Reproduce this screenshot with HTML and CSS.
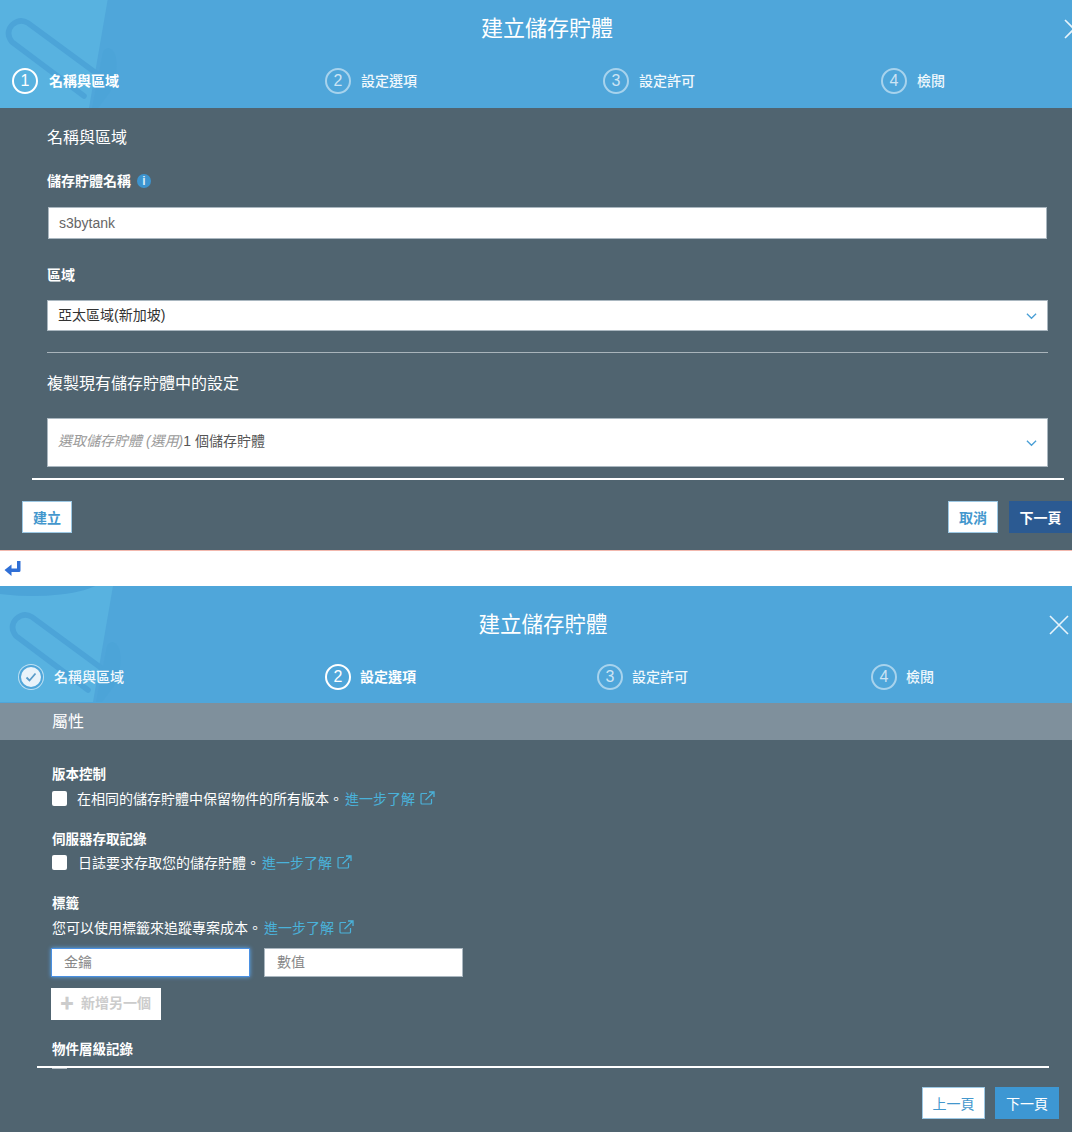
FILE: index.html
```html
<html>
  <head>
    <title>建立儲存貯體</title>
    <meta name="viewport" content="width=device-width, initial-scale=1">
    <link rel="stylesheet" href="styles.css">
  </head>
  <body>
    <!-- Shared icons -->
    <svg class="defs" xmlns="http://www.w3.org/2000/svg">
      <symbol id="chevron" viewBox="0 0 12 8">
        <path d="M1 1.5 L6 6.5 L11 1.5" fill="none" stroke="#4a9fd6" stroke-width="1.4"/>
      </symbol>
      <symbol id="external" viewBox="0 0 15 14">
        <path d="M7 2.5 H2 Q1 2.5 1 3.5 V12 Q1 13 2 13 H10.5 Q11.5 13 11.5 12 V8" fill="none" stroke="#4ab2da" stroke-width="1.2"/>
        <path d="M5.5 9 L13 1.8 M9 1 H14 V6" fill="none" stroke="#4ab2da" stroke-width="1.3"/>
      </symbol>
      <symbol id="bucket" viewBox="0 0 130 116">
        <path d="M0 0 H113 L93 116 H0 Z" fill="#58b2e0"/>
        <path d="M104 84 L32 31 Q24 26 16 33 Q9 41 16 50 L88 104" fill="none" stroke="#4ca4d8" stroke-width="5.5" stroke-linecap="round"/>
        <path d="M107 60 Q113 51 119 62 Q124 78 114 100 L102 116 L96 116 Z" fill="#4ca4d8"/>
      </symbol>
    </svg>

    <!-- First wizard step -->
    <section class="dialog dialog-first">
      <header class="head head-first">
        <svg class="bucket bucket-first"><use href="#bucket"/></svg>
        <h1 class="title title-first">建立儲存貯體</h1>
        <svg class="close close-first" viewBox="0 0 20 20"><path d="M1 1 L19 19 M19 1 L1 19" stroke="#e8f4fb" stroke-width="1.6"/></svg>
        <div class="steps steps-first">
          <div class="step step-on"><span class="num">1</span><span class="step-text">名稱與區域</span></div>
          <div class="step"><span class="num">2</span><span class="step-text">設定選項</span></div>
          <div class="step"><span class="num">3</span><span class="step-text">設定許可</span></div>
          <div class="step"><span class="num">4</span><span class="step-text">檢閱</span></div>
        </div>
      </header>
      <div class="form">
        <h2 class="section">名稱與區域</h2>
        <div class="label label-name">儲存貯體名稱 <span class="info">i</span></div>
        <div class="field field-name">s3bytank</div>
        <div class="label label-region">區域</div>
        <div class="field field-select">亞太區域(新加坡)<svg class="chevron"><use href="#chevron"/></svg></div>
        <div class="rule"></div>
        <h2 class="section section-copy">複製現有儲存貯體中的設定</h2>
        <div class="field field-select field-tall"><span><em>選取儲存貯體 (選用)</em>1 個儲存貯體</span><svg class="chevron"><use href="#chevron"/></svg></div>
      </div>
      <div class="line line-first"></div>
      <footer class="foot foot-first">
        <a class="btn btn-plain">建立</a>
        <div class="spacer"></div>
        <a class="btn btn-plain">取消</a>
        <a class="btn btn-dark">下一頁</a>
      </footer>
    </section>

    <div class="gap">
      <svg class="return" viewBox="0 0 17 16"><path d="M13 0 H16.5 V9.5 Q16.5 11 15 11 H7.5 V15 L0.5 9 L7.5 3.5 V7.5 H13 Z" fill="#2f6fd6"/></svg>
    </div>

    <!-- Second wizard step -->
    <section class="dialog dialog-second">
      <header class="head head-second">
        <svg class="bucket bucket-second"><use href="#bucket"/></svg>
        <div class="rim"></div>
        <h1 class="title title-second">建立儲存貯體</h1>
        <svg class="close close-second" viewBox="0 0 20 20"><path d="M1 1 L19 19 M19 1 L1 19" stroke="#e8f4fb" stroke-width="1.6"/></svg>
        <div class="steps steps-second">
          <div class="step step-done">
            <span class="num num-done">
              <svg viewBox="0 0 12 10"><path d="M1.5 5.5 L4.5 8.5 L10.5 1.5" fill="none" stroke="#5a9cc9" stroke-width="1.8"/></svg>
            </span><span class="step-text">名稱與區域</span>
          </div>
          <div class="step step-on"><span class="num">2</span><span class="step-text">設定選項</span></div>
          <div class="step"><span class="num">3</span><span class="step-text">設定許可</span></div>
          <div class="step"><span class="num">4</span><span class="step-text">檢閱</span></div>
        </div>
      </header>
      <div class="band">屬性</div>
      <div class="props">
        <div class="prop-title">版本控制</div>
        <div class="check-row">
          <span class="check"></span>
          <span class="check-text">在相同的儲存貯體中保留物件的所有版本。</span>
          <a class="more">進一步了解<svg class="external"><use href="#external"/></svg></a>
        </div>
        <div class="prop-title prop-gap">伺服器存取記錄</div>
        <div class="check-row check-row-tight">
          <span class="check"></span>
          <span class="check-text check-text-log">日誌要求存取您的儲存貯體。</span>
          <a class="more">進一步了解<svg class="external"><use href="#external"/></svg></a>
        </div>
        <div class="prop-title prop-gap">標籤</div>
        <div class="check-row">
          <span>您可以使用標籤來追蹤專案成本。</span>
          <a class="more">進一步了解<svg class="external"><use href="#external"/></svg></a>
        </div>
        <div class="tag-row">
          <div class="tag-input tag-focus">金鑰</div>
          <div class="tag-input">數值</div>
        </div>
        <div class="add-btn"><span class="plus">✚</span>新增另一個</div>
        <div class="prop-title prop-last">物件層級記錄</div>
        <div class="sliver"></div>
      </div>
      <div class="line line-second"></div>
      <footer class="foot foot-second">
        <div class="spacer"></div>
        <a class="btn btn-plain btn-wide">上一頁</a>
        <a class="btn btn-blue btn-wide">下一頁</a>
      </footer>
    </section>
  </body>
</html>
```

FILE: styles.css
```css
body {
  margin: 0;
  padding: 0;
  overflow-x: hidden;
  background: #fff;
  font-family: "Liberation Sans", "Noto Sans CJK TC", sans-serif;
  font-size: 14px;
  color: #fff;
}
h1, h2 {
  margin: 0;
  font-weight: 400;
}
.defs {
  display: none;
}

/* Wizard panels */
.dialog {
  position: relative;
  width: 1072px;
  overflow: hidden;
  background: #506470;
}
.dialog-first {
  height: 550px;
  border-bottom: 1px solid #f2b8ae;
}
.dialog-second {
  height: 546px;
}
.gap {
  height: 35px;
  display: flex;
  align-items: center;
  padding-left: 4px;
}
.return {
  width: 17px;
  height: 16px;
}

/* Blue header with bucket picture */
.head {
  position: relative;
  background: #4fa6da;
  overflow: hidden;
}
.head-first {
  height: 108px;
}
.head-second {
  height: 117px;
}
.bucket {
  position: absolute;
  width: 130px;
  height: 116px;
}
.bucket-first {
  left: -4px;
  top: -8px;
}
.bucket-second {
  left: 0;
  top: 0;
}
.rim {
  position: absolute;
  left: -40px;
  top: -30px;
  width: 145px;
  height: 40px;
  border-radius: 50%;
  background: #4ca4d8;
}
.title {
  position: relative;
  text-align: center;
  font-size: 22px;
}
.title-first {
  line-height: 58px;
  padding-left: 22px;
}
.title-second {
  line-height: 48px;
  padding-top: 15px;
  padding-left: 14px;
  font-size: 21.5px;
}
.close {
  position: absolute;
}
.close-first {
  left: 1064px;
  top: 19px;
  width: 20px;
  height: 20px;
}
.close-second {
  left: 1049px;
  top: 29px;
  width: 20px;
  height: 20px;
}
.steps {
  position: relative;
  display: grid;
}
.steps-first {
  grid-template-columns: 313px 278px 278px 1fr;
  margin-top: 10px;
  padding-left: 12px;
}
.steps-second {
  grid-template-columns: 307px 272px 274px 1fr;
  margin-top: 15px;
  padding-left: 18px;
}
.step {
  display: flex;
  align-items: center;
  gap: 10px;
  height: 26px;
  font-weight: 500;
  color: #f2f9fd;
}
.steps-first .step-on {
  gap: 11px;
}
.steps-second .step {
  gap: 9px;
}
.step-text {
  margin-bottom: 2px;
}
.step-on {
  font-weight: 700;
  color: #fff;
}
.num {
  box-sizing: border-box;
  width: 26px;
  height: 26px;
  display: flex;
  align-items: center;
  justify-content: center;
  border: 2px solid rgba(255, 255, 255, 0.5);
  border-radius: 50%;
  font-size: 16px;
  font-weight: 400;
  color: rgba(255, 255, 255, 0.72);
}
.step-on .num {
  border-color: #fff;
  color: #fff;
}
.num-done {
  background: #e9f3fa;
  border: 0;
  box-shadow: 0 0 0 2px #4fa6da, 0 0 0 3px rgba(255, 255, 255, 0.6);
  width: 20px;
  height: 20px;
  margin: 3px;
}
.num-done svg {
  width: 12px;
  height: 10px;
}
.steps-second .step-done {
  gap: 10px;
}

/* First panel form */
.form {
  box-sizing: border-box;
  height: 359px;
  padding: 19px 24px 0 47px;
}
.section {
  font-size: 16px;
  line-height: 22px;
}
.section-copy {
  margin-top: 20px;
}
.label {
  font-weight: 700;
  line-height: 20px;
  display: flex;
  align-items: center;
  gap: 6px;
}
.label-name {
  margin-top: 22px;
}
.label-region {
  margin-top: 26px;
}
.info {
  width: 14px;
  height: 14px;
  border-radius: 50%;
  background: #3d94cf;
  color: #dcecf7;
  font-size: 12px;
  line-height: 14px;
  text-align: center;
}
.field {
  box-sizing: border-box;
  background: #fff;
  border: 1px solid #aab7c0;
  color: #333;
  display: flex;
  align-items: center;
  padding-left: 10px;
}
.field-name {
  margin: 16px 1px 0;
  height: 32px;
  color: #666;
}
.field-select {
  margin-top: 15px;
  height: 31px;
  padding-bottom: 3px;
  justify-content: space-between;
}
.field-tall {
  margin-top: 23px;
  height: 49px;
  padding-bottom: 5px;
  color: #555;
}
.field-tall em {
  color: #9a9a9a;
}
.chevron {
  width: 11px;
  height: 8px;
  margin-top: 3px;
  margin-right: 10px;
}
.field-tall .chevron {
  margin-top: 5px;
}
.rule {
  margin-top: 21px;
  height: 1px;
  background: #a9b4bb;
}

/* White line and button bars */
.line {
  height: 2px;
  background: #fff;
}
.line-first {
  margin: 11px 8px 0 32px;
}
.line-second {
  margin: 0 23px 0 37px;
}
.foot {
  display: flex;
  gap: 11px;
}
.foot-first {
  padding: 21px 0 0 22px;
}
.foot-second {
  padding: 19px 13px 0 0;
  gap: 10px;
}
.spacer {
  flex: 1;
}
.btn {
  box-sizing: border-box;
  width: 50px;
  height: 32px;
  display: flex;
  align-items: center;
  justify-content: center;
  font-weight: 700;
}
.btn-plain {
  background: #fff;
  color: #4397cd;
  border: 1px solid #9cc8e4;
}
.btn-dark {
  width: 63px;
  background: #2b5a92;
  color: #fff;
}
.btn-blue {
  background: #3d97d3;
  color: #fff;
}
.btn-wide {
  width: 63px;
  font-weight: 400;
}
.foot-second .btn-blue {
  width: 64px;
}

/* Second panel properties */
.band {
  height: 37px;
  line-height: 38px;
  padding-left: 52px;
  background: #7f909c;
  font-size: 16px;
}
.props {
  height: 326px;
  padding: 26px 0 0 52px;
  box-sizing: border-box;
}
.prop-title {
  font-weight: 700;
  line-height: 18px;
  font-size: 13.5px;
}
.prop-gap {
  margin-top: 24px;
}
.prop-last {
  margin-top: 21px;
}
.check-row {
  display: flex;
  align-items: center;
  height: 18px;
  margin-top: 5px;
}
.check-row-tight {
  margin-top: 4px;
}
.check {
  width: 15px;
  height: 15px;
  border-radius: 2px;
  background: #fff;
}
.check-text {
  margin-left: 10px;
}
.check-text-log {
  margin-left: 11px;
}
.more {
  display: flex;
  align-items: center;
  gap: 5px;
  margin-left: 2px;
  color: #4ab2da;
}
.external {
  width: 15px;
  height: 14px;
}
.tag-row {
  display: flex;
  gap: 14px;
  margin: 12px 0 0 -1px;
}
.tag-input {
  box-sizing: border-box;
  width: 199px;
  height: 29px;
  line-height: 26px;
  padding-left: 12px;
  background: #fff;
  border: 1px solid #aab7c0;
  color: #888;
}
.tag-focus {
  border-color: #4a90e2;
  box-shadow: 0 0 4px #5ba6ee;
}
.add-btn {
  box-sizing: border-box;
  width: 110px;
  height: 32px;
  margin: 11px 0 0 -1px;
  display: flex;
  align-items: center;
  gap: 7px;
  padding: 0 0 4px 9px;
  background: #fff;
  color: #cccccc;
  font-weight: 700;
}
.plus {
  font-size: 14px;
}
.sliver {
  width: 15px;
  height: 1px;
  margin-top: 9px;
  background: #aeb9c0;
}
```
